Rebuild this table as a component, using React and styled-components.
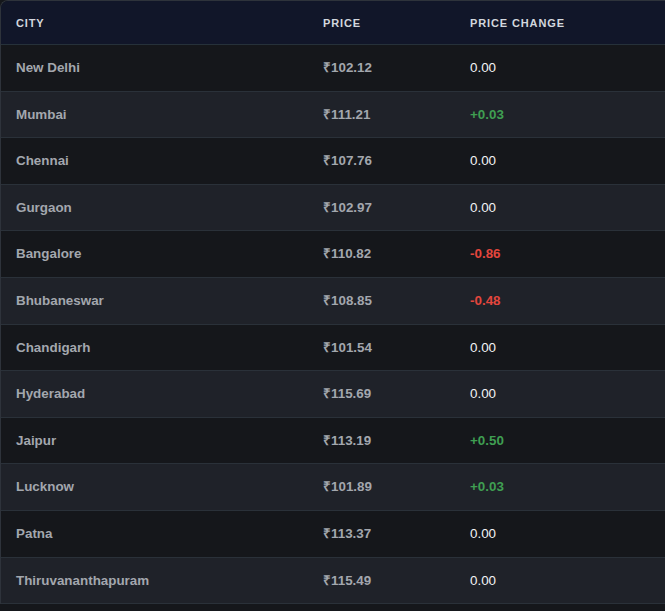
import React from 'react';
import styled, { createGlobalStyle } from 'styled-components';

const GlobalStyle = createGlobalStyle`
	html, body {
		margin: 0;
		padding: 0;
		background: #15171b;
		overflow: hidden;
	}
	body {
		font-family: "Liberation Sans", Arial, sans-serif;
	}
`;

const Wrapper = styled.div`
	width: 720px;
	border: 1px solid #2e333b;
	border-right: none;
	border-bottom: none;
	border-radius: 8px 0 0 0;
	overflow: hidden;
	background: #15171b;
`;

const Table = styled.table`
	width: 100%;
	border-collapse: collapse;
	table-layout: fixed;
`;

const HeadCell = styled.th`
	box-sizing: border-box;
	background: #111629;
	color: #d3d7de;
	font-size: 11px;
	font-weight: 700;
	letter-spacing: 0.08em;
	text-transform: uppercase;
	text-align: left;
	padding: 12.5px 15px 12.5px;
	line-height: 18px;
	border-bottom: 1px solid #26313a;
	width: ${p => p.$width || 'auto'};
`;

const Row = styled.tr`
	background: ${p => (p.$alt ? '#1f2229' : '#15171b')};
	border-bottom: 1px solid #2a3139;
`;

const Cell = styled.td`
	padding: 13px 15px;
	line-height: 19.6px;
	font-size: 13.4px;
	font-weight: 700;
	color: #a3a7ae;
	white-space: nowrap;
`;

const Change = styled(Cell)`
	font-weight: ${p => (p.$tone === 'flat' ? 400 : 700)};
	color: ${p => ({ up: '#3f9f52', down: '#e2463d', flat: '#f2f3f5' })[p.$tone]};
`;

const rows = [
	['New Delhi', '102.12', '0.00'],
	['Mumbai', '111.21', '+0.03'],
	['Chennai', '107.76', '0.00'],
	['Gurgaon', '102.97', '0.00'],
	['Bangalore', '110.82', '-0.86'],
	['Bhubaneswar', '108.85', '-0.48'],
	['Chandigarh', '101.54', '0.00'],
	['Hyderabad', '115.69', '0.00'],
	['Jaipur', '113.19', '+0.50'],
	['Lucknow', '101.89', '+0.03'],
	['Patna', '113.37', '0.00'],
	['Thiruvananthapuram', '115.49', '0.00'],
];

const toneOf = v => (v.startsWith('+') ? 'up' : v.startsWith('-') ? 'down' : 'flat');

export default function App() {
	return (
		<>
			<GlobalStyle />
			<Wrapper>
				<Table>
					<thead>
						<tr>
							<HeadCell $width="307px">City</HeadCell>
							<HeadCell $width="147px">Price</HeadCell>
							<HeadCell>Price Change</HeadCell>
						</tr>
					</thead>
					<tbody>
						{rows.map(([city, price, change], i) => (
							<Row key={city} $alt={i % 2 === 1}>
								<Cell>{city}</Cell>
								<Cell>₹{price}</Cell>
								<Change $tone={toneOf(change)}>{change}</Change>
							</Row>
						))}
					</tbody>
				</Table>
			</Wrapper>
		</>
	);
}
